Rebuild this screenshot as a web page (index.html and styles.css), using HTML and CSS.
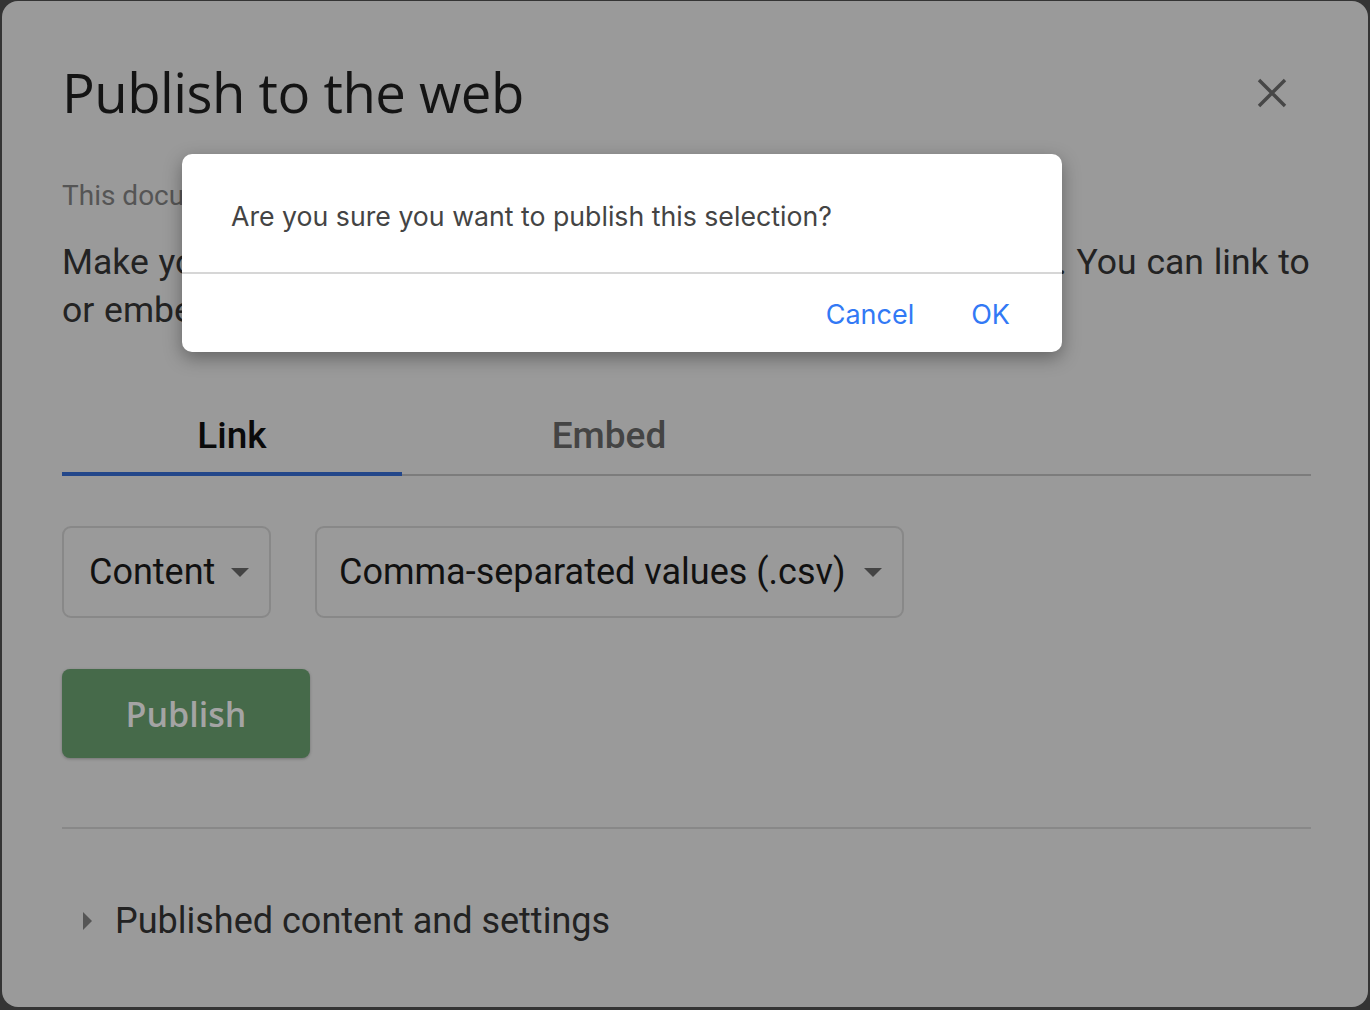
FILE: index.html
```html
<!DOCTYPE html>
<html>
<head>
<meta charset="utf-8">
<link rel="stylesheet" href="styles.css">
</head>
<body>
<div class="dialog">
  <div class="head">
    <h1 class="title">Publish to the web</h1>
    <svg class="close" width="30" height="30" viewBox="0 0 30 30"><path d="M2 2 L28 28 M28 2 L2 28" stroke="#474747" stroke-width="3.4" fill="none"/></svg>
  </div>
  <p class="status">This document is not published to the web.</p>
  <p class="intro"><span class="nowrap">Make your content visible to anyone by publishing it to the web. You can link to</span><br>or embed your document. Learn more</p>
  <div class="tabs">
    <div class="tab tab-active">Link</div>
    <div class="tab tab-embed">Embed</div>
  </div>
  <div class="selects">
    <div class="select sel-content">Content<span class="caret"></span></div>
    <div class="select sel-format">Comma-separated values (.csv)<span class="caret"></span></div>
  </div>
  <div class="publish">Publish</div>
  <div class="divider"></div>
  <div class="settings"><span class="tri"></span>Published content and settings</div>
</div>

<div class="confirm">
  <div class="confirm-msg">Are you sure you want to publish this selection?</div>
  <div class="confirm-actions">
    <span class="btn">Cancel</span>
    <span class="btn">OK</span>
  </div>
</div>
</body>
</html>
```

FILE: styles.css
```css
html, body {
  margin: 0;
  padding: 0;
}
body {
  width: 1370px;
  height: 1010px;
  background: #343434;
  position: relative;
  overflow: hidden;
  font-family: Roboto, "Liberation Sans", sans-serif;
}
.dialog {
  position: absolute;
  left: 2px;
  top: 1px;
  width: 1366px;
  height: 1006px;
  box-sizing: border-box;
  background: #9a9a9a;
  border-radius: 16px;
  padding: 0 57px 0 60px;
}
.head {
  display: flex;
  align-items: center;
  justify-content: space-between;
  height: 126px;
  padding-top: 28px;
}
.title {
  margin: 0;
  font-family: "Open Sans", sans-serif;
  font-weight: 400;
  font-size: 54.5px;
  line-height: 64px;
  color: #141414;
  letter-spacing: -0.5px;
  padding-top: 0;
}
.close {
  margin-right: 24px;
  margin-top: 2px;
}
.status {
  margin: 21px 0 0;
  font-size: 28px;
  line-height: 40px;
  color: #555;
}
.intro {
  margin: 22px 0 0;
  font-size: 35.5px;
  line-height: 48px;
  color: #232323;
  white-space: nowrap;
  word-spacing: 1px;
}
.tabs {
  display: flex;
  margin-top: 69px;
  border-bottom: 2px solid #7c7c7c;
  width: 1249px;
}
.tab {
  font-size: 37px;
  font-weight: 500;
  height: 73px;
  line-height: 66px;
  text-align: center;
  box-sizing: border-box;
  margin-bottom: -2px;
}
.tab-active {
  width: 340px;
  color: #0a0a0a;
  border-bottom: 4px solid #23478a;
}
.tab-embed {
  width: 414px;
  color: #444;
}
.selects {
  display: flex;
  gap: 44px;
  margin-top: 50px;
}
.select {
  height: 92px;
  box-sizing: border-box;
  border: 2px solid #888;
  border-radius: 9px;
  display: flex;
  align-items: center;
  padding: 0 20px 0 25px;
  font-size: 36px;
  color: #111;
}
.sel-content { width: 209px; }
.sel-format { width: 589px; padding-left: 22px; }
.caret {
  width: 0;
  height: 0;
  border-left: 9px solid transparent;
  border-right: 9px solid transparent;
  border-top: 9px solid #444;
  margin-left: auto;
}
.publish {
  margin-top: 51px;
  width: 248px;
  height: 89px;
  border-radius: 8px;
  background: #466a4a;
  color: #a4a4a4;
  font-family: "Open Sans", sans-serif;
  font-weight: 600;
  font-size: 34px;
  display: flex;
  align-items: center;
  justify-content: center;
  box-shadow: 0 1px 3px rgba(0,0,0,0.25);
}
.divider {
  margin-top: 69px;
  width: 1249px;
  height: 2px;
  background: #888;
}
.settings {
  margin-top: 71px;
  display: flex;
  align-items: center;
  font-size: 36px;
  color: #222;
  padding-left: 21px;
}
.tri {
  width: 0;
  height: 0;
  border-top: 9px solid transparent;
  border-bottom: 9px solid transparent;
  border-left: 9px solid #555;
  margin-right: 23px;
}
.confirm {
  position: absolute;
  left: 182px;
  top: 154px;
  width: 880px;
  height: 198px;
  background: #fff;
  border-radius: 10px;
  box-shadow: 0 6px 18px rgba(0,0,0,0.35);
  font-family: Inter, "Liberation Sans", sans-serif;
  display: flex;
  flex-direction: column;
}
.confirm-msg {
  height: 120px;
  box-sizing: border-box;
  border-bottom: 2px solid #d6d6d6;
  padding: 44px 0 0 49px;
  font-size: 26.7px;
  line-height: 36px;
  color: #444;
}
.confirm-actions {
  display: flex;
  justify-content: flex-end;
  gap: 57px;
  padding: 21px 52px 0 0;
}
.btn {
  font-size: 27px;
  line-height: 40px;
  color: #3279f5;
}
```
